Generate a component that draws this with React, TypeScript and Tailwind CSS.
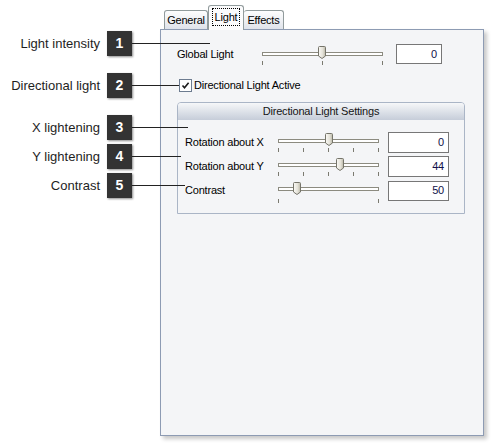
import React from "react";

const UI = { fontFamily: '"Liberation Sans", Arial, sans-serif' };

function Thumb() {
  return (
    <svg width="8" height="13" viewBox="0 0 8 13" className="block">
      <defs>
        <linearGradient id="thumbg" x1="0" y1="0" x2="1" y2="0">
          <stop offset="0" stopColor="#fbfaf6" />
          <stop offset="0.6" stopColor="#e4e2d8" />
          <stop offset="1" stopColor="#b9b6a6" />
        </linearGradient>
      </defs>
      <path
        d="M0.5 1.5 Q0.5 0.5 1.5 0.5 H6.5 Q7.5 0.5 7.5 1.5 V10 L4 12.5 L0.5 10 Z"
        fill="url(#thumbg)"
        stroke="#75746a"
      />
    </svg>
  );
}

function Slider({
  w,
  thumb,
  ticks,
  trackTop,
  thumbTop,
  tickTop,
}: {
  w: string;
  thumb: number;
  ticks: number[];
  trackTop: string;
  thumbTop: string;
  tickTop: string;
}) {
  return (
    <div className={`relative h-[21px] shrink-0 ${w}`}>
      <div
        className={`absolute left-0 right-0 h-[4px] border border-[#8c8b80] bg-white ${trackTop}`}
      />
      {ticks.map((t) => (
        <div
          key={t}
          className={`absolute w-px h-[4px] bg-[#7b7a70] ${tickTop}`}
          style={{ left: t }}
        />
      ))}
      <div className={`absolute ${thumbTop}`} style={{ left: thumb }}>
        <Thumb />
      </div>
    </div>
  );
}

function NumBox({ value, w, h }: { value: string; w: string; h: string }) {
  return (
    <div
      className={`shrink-0 border border-[#777777] bg-white flex items-center justify-end pr-[4px] text-[11px] text-[#10104a] ${w} ${h}`}
    >
      {value}
    </div>
  );
}

function Callout({
  top,
  label,
  n,
  line,
}: {
  top: string;
  label: string;
  n: string;
  line: string;
}) {
  return (
    <div className={`absolute left-0 flex items-center h-[25px] ${top}`}>
      <div className="w-[100px] text-right text-[13px] text-[#1e1e1e] whitespace-nowrap">
        {label}
      </div>
      <div className="ml-[7px] w-[25px] h-[25px] bg-[#333333] text-white font-bold text-[14px] flex items-center justify-center shadow-[1px_1px_2px_rgba(0,0,0,0.45)]">
        {n}
      </div>
      <div className={`h-px bg-[#222222] ${line}`} />
    </div>
  );
}

export default function App() {
  return (
    <div
      className="relative w-[493px] h-[445px] bg-white overflow-hidden"
      style={UI}
    >
      {/* Dialog */}
      <div className="ml-[160px] pt-[5px] w-[324px]">
        {/* Tabs */}
        <div className="flex items-end h-[24px] pl-[4px] text-[11px] tracking-[-0.2px] text-black">
          <div className="w-[44px] h-[19px] border border-b-0 border-[#919b9c] rounded-t-[3px] bg-gradient-to-b from-[#fefefe] to-[#dfe3ea] flex items-center justify-center">
            General
          </div>
          <div className="relative z-10 -mb-px w-[36px] h-[25px] border border-b-0 border-[#919b9c] rounded-t-[3px] bg-[#fbfbfc] flex justify-center pt-[2px]">
            <span className="h-[18px] leading-[16px] px-[2px] border border-dotted border-black">
              Light
            </span>
          </div>
          <div className="w-[40px] h-[19px] border border-b-0 border-l-0 border-[#919b9c] rounded-t-[3px] bg-gradient-to-b from-[#fefefe] to-[#dfe3ea] flex items-center justify-center">
            Effects
          </div>
        </div>

        {/* Panel */}
        <div className="h-[407px] border border-[#8d9bb3] bg-[#f4f5f7] shadow-[3px_3px_4px_rgba(0,0,0,0.22)] pl-[16px] text-[11px] tracking-[-0.2px] text-black">
          {/* Global light */}
          <div className="mt-[14px] flex items-center h-[20px]">
            <div className="w-[85px] shrink-0">Global Light</div>
            <Slider
              w="w-[121px]"
              thumb={56}
              ticks={[0, 60, 120]}
              trackTop="top-[8px]"
              thumbTop="top-[2px]"
              tickTop="top-[17px]"
            />
            <div className="ml-[13px]">
              <NumBox value="0" w="w-[46px]" h="h-[20px]" />
            </div>
          </div>

          {/* Checkbox */}
          <div className="mt-[15px] flex items-center h-[13px] pl-[2px]">
            <div className="w-[13px] h-[13px] border border-[#6d7c90] bg-white flex items-center justify-center">
              <svg width="9" height="9" viewBox="0 0 9 9">
                <path
                  d="M1.5 4.5 L3.5 6.8 L7.6 1.8"
                  fill="none"
                  stroke="#1a1a1a"
                  strokeWidth="1.6"
                />
              </svg>
            </div>
            <div className="ml-[2px]">Directional Light Active</div>
          </div>

          {/* Group box */}
          <div className="mt-[10px] w-[288px] h-[112px] border border-[#aab5c6] rounded-t-[4px]">
            <div className="h-[17px] rounded-t-[3px] bg-gradient-to-b from-[#f6f7f9] to-[#c6cdd9] flex items-center justify-center text-[#151515]">
              Directional Light Settings
            </div>
            <div className="pl-[7px] pt-[12px] flex flex-col gap-[3px]">
              <div className="flex items-center h-[21px]">
                <div className="w-[93px] shrink-0">Rotation about X</div>
                <Slider
                  w="w-[101px]"
                  thumb={47}
                  ticks={[0, 25, 50, 75, 100]}
                  trackTop="top-[7px]"
                  thumbTop="top-[1px]"
                  tickTop="top-[16px]"
                />
                <div className="ml-[9px]">
                  <NumBox value="0" w="w-[61px]" h="h-[21px]" />
                </div>
              </div>
              <div className="flex items-center h-[21px]">
                <div className="w-[93px] shrink-0">Rotation about Y</div>
                <Slider
                  w="w-[101px]"
                  thumb={58}
                  ticks={[0, 25, 50, 75, 100]}
                  trackTop="top-[7px]"
                  thumbTop="top-[2px]"
                  tickTop="top-[16px]"
                />
                <div className="ml-[9px]">
                  <NumBox value="44" w="w-[61px]" h="h-[21px]" />
                </div>
              </div>
              <div className="flex items-center h-[21px]">
                <div className="w-[93px] shrink-0">Contrast</div>
                <Slider
                  w="w-[101px]"
                  thumb={15}
                  ticks={[0, 100]}
                  trackTop="top-[7px]"
                  thumbTop="top-[2px]"
                  tickTop="top-[19px]"
                />
                <div className="ml-[9px]">
                  <NumBox value="50" w="w-[61px]" h="h-[20px]" />
                </div>
              </div>
            </div>
          </div>
        </div>
      </div>

      {/* Callouts */}
      <Callout top="top-[31px]" label="Light intensity" n="1" line="w-[78px]" />
      <Callout top="top-[73px]" label="Directional light" n="2" line="w-[47px]" />
      <Callout top="top-[115px]" label="X lightening" n="3" line="w-[56px]" />
      <Callout top="top-[144px]" label="Y lightening" n="4" line="w-[49px]" />
      <Callout top="top-[173px]" label="Contrast" n="5" line="w-[53px]" />
    </div>
  );
}
